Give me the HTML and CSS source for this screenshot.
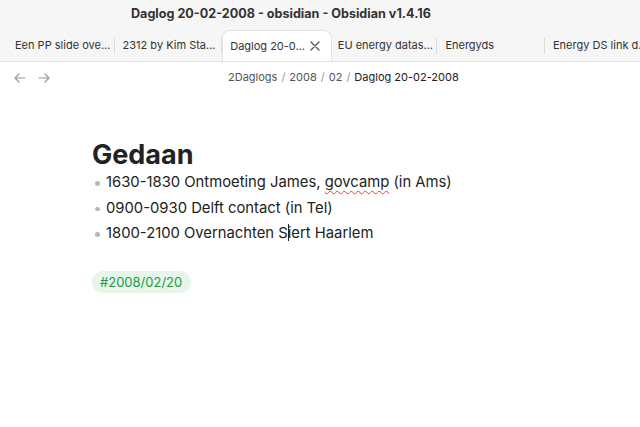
FILE: index.html
```html
<!DOCTYPE html>
<html>
<head>
<meta charset="utf-8">
<link rel="stylesheet" href="styles.css">
</head>
<body>
<div class="window">
  <div class="titlebar">Daglog 20-02-2008 - obsidian - Obsidian v1.4.16</div>
  <div class="tabbar">
    <div class="tab">Een PP slide ove...</div>
    <div class="tab">2312 by Kim Sta...</div>
    <div class="tab active"><span>Daglog 20-0...</span>
      <svg class="close" width="10" height="10" viewBox="0 0 10 10"><path d="M1 1L9 9M9 1L1 9" stroke="#555" stroke-width="1.3" stroke-linecap="round"/></svg>
    </div>
    <div class="tab">EU energy datas...</div>
    <div class="tab">Energyds</div>
    <div class="tab last">Energy DS link d...</div>
  </div>
  <div class="navbar">
    <div class="arrows">
      <svg width="12" height="10" viewBox="0 0 12 10"><path d="M11 5H1.5M5 1L1 5L5 9" fill="none" stroke="#9a9a9a" stroke-width="1.2" stroke-linecap="round" stroke-linejoin="round"/></svg>
      <svg width="12" height="10" viewBox="0 0 12 10"><path d="M1 5H10.5M7 1L11 5L7 9" fill="none" stroke="#9a9a9a" stroke-width="1.2" stroke-linecap="round" stroke-linejoin="round"/></svg>
    </div>
    <div class="crumbs">
      <span>2Daglogs</span><span class="sep">/</span><span>2008</span><span class="sep">/</span><span>02</span><span class="sep">/</span><span class="cur">Daglog 20-02-2008</span>
    </div>
  </div>
  <div class="content">
    <h1>Gedaan</h1>
    <ul>
      <li>1630-1830 Ontmoeting James, <span class="spell">govcamp</span> (in Ams)</li>
      <li>0900-0930 Delft contact (in Tel)</li>
      <li>1800-2100 Overnachten S<span class="caret"></span>iert Haarlem</li>
    </ul>
    <span class="tag">#2008/02/20</span>
  </div>
</div>
</body>
</html>
```
FILE: styles.css
```css
* { box-sizing: border-box; }
html, body { margin: 0; padding: 0; }
body {
  width: 640px;
  height: 427px;
  overflow: hidden;
  font-family: Inter, "Noto Sans", sans-serif;
  background: #fff;
  color: #222;
}
.titlebar {
  height: 30px;
  background: #f6f6f6;
  font-size: 12.6px;
  font-weight: 700;
  color: #333;
  padding-left: 131px;
  line-height: 27px;
  white-space: nowrap;
}
.tabbar {
  height: 32px;
  background: #f6f6f6;
  border-bottom: 1px solid #e3e3e3;
  display: flex;
  align-items: stretch;
  padding-left: 7px;
  font-size: 11px;
  color: #333;
  overflow: hidden;
}
.tab {
  flex: 0 0 107.6px;
  display: flex;
  align-items: center;
  padding-left: 8px;
  padding-bottom: 1px;
  white-space: nowrap;
  position: relative;
}
.tab::after {
  content: "";
  position: absolute;
  right: 0;
  top: 8px;
  height: 16px;
  border-right: 1px solid #dcdcdc;
}
.tab.active::after, .tab.last::after { display: none; }
.tab.active {
  background: #fff;
  border-radius: 8px 8px 0 0;
  border: 1px solid #e3e3e3;
  border-bottom: none;
  margin-bottom: -1px;
  margin-right: -2px;
  justify-content: space-between;
  padding-left: 7px;
  padding-right: 11px;
  flex-basis: 109.6px;
}
.tab.last { flex: 1 1 auto; overflow: hidden; }
.navbar {
  height: 31px;
  display: flex;
  align-items: center;
  padding-left: 14px;
  position: relative;
}
.arrows { display: flex; gap: 12px; }
.crumbs {
  position: absolute;
  left: 228px;
  top: 8px;
  font-size: 11px;
  color: #555;
  white-space: nowrap;
}
.crumbs .sep { color: #999; margin: 0 4px; }
.crumbs .cur { color: #222; }
.content { padding: 46px 0 0 92px; }
h1 {
  margin: 0;
  font-size: 27px;
  font-weight: 700;
  line-height: 31px;
  color: #222;
}
ul {
  list-style: none;
  margin: 0;
  padding: 0;
}
li {
  font-size: 14.8px;
  line-height: 25.5px;
  padding-left: 14px;
  position: relative;
  color: #222;
}
li::before {
  content: "";
  position: absolute;
  left: 3px;
  top: 11px;
  width: 4.5px;
  height: 4.5px;
  border-radius: 50%;
  background: #b8b8b8;
}
.spell {
  text-decoration: underline wavy #e0443e;
  text-decoration-thickness: 1px;
  text-underline-offset: 3px;
}
.caret {
  display: inline-block;
  width: 1px;
  height: 17px;
  background: #222;
  vertical-align: -3px;
  margin-right: -1px;
}
.tag {
  display: inline-block;
  margin-top: 24px;
  background: #e7f5ea;
  color: #229a45;
  font-size: 13px;
  line-height: 22px;
  padding: 0 9px 0 8px;
  border-radius: 11px;
}
```
